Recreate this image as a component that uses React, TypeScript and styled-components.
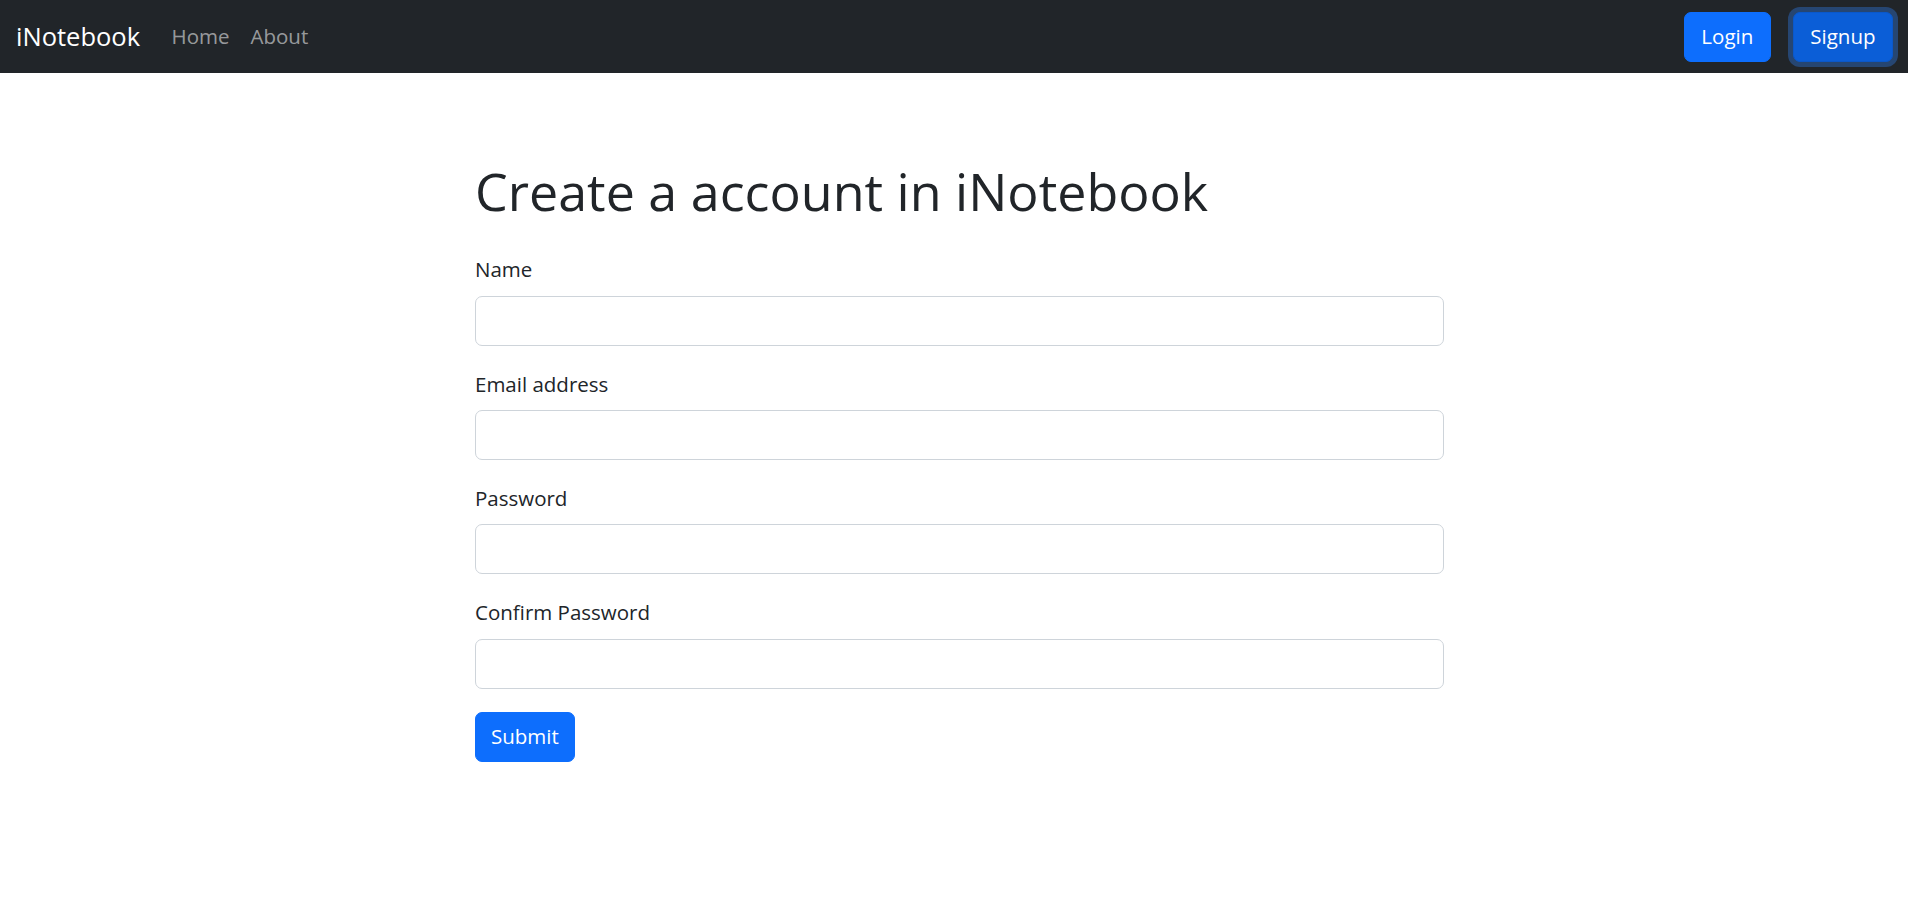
import styled, { createGlobalStyle } from "styled-components";

const GlobalStyle = createGlobalStyle`
  * {
    box-sizing: border-box;
  }
  body {
    margin: 0;
    background: #ffffff;
    color: #212529;
    font-family: "Open Sans", "Noto Sans", sans-serif;
  }
`;

const Navbar = styled.nav`
  height: 73px;
  background-color: #212529;
  display: flex;
  align-items: center;
  justify-content: space-between;
  padding: 0 15px 0 16px;
`;

const NavLeft = styled.div`
  display: flex;
  align-items: center;
`;

const Brand = styled.a`
  color: #ffffff;
  font-size: 25.5px;
  text-decoration: none;
  margin-right: 21px;
  line-height: 1.5;
`;

const NavLink = styled.a`
  color: rgba(255, 255, 255, 0.55);
  font-size: 20.5px;
  padding: 0 10.5px;
  text-decoration: none;
  line-height: 1.5;
`;

const NavRight = styled.div`
  display: flex;
  align-items: center;
  gap: 22px;
`;

const Button = styled.button<{ $focused?: boolean }>`
  height: 50px;
  padding: 0 15px;
  border: 1px solid ${(p) => (p.$focused ? "#0a58ca" : "#0d6efd")};
  border-radius: 7px;
  background-color: ${(p) => (p.$focused ? "#0b5ed7" : "#0d6efd")};
  color: #ffffff;
  font-family: "Open Sans", "Noto Sans", sans-serif;
  font-size: 20.5px;
  line-height: 1;
  box-shadow: ${(p) =>
    p.$focused ? "0 0 0 5px rgba(49, 132, 253, 0.35)" : "none"};
  cursor: pointer;
`;

const NavButton = styled(Button)`
  padding: 0 16.5px;
`;

const Wrapper = styled.main`
  width: 980px;
  margin: 0 auto;
  padding: 87px 0 0 11px;
`;

const Title = styled.h1`
  font-size: 52px;
  font-weight: 400;
  line-height: 1.2;
  margin: 0 0 31px;
  color: #212529;
`;

const Field = styled.div`
  display: flex;
  flex-direction: column;
  margin-bottom: 21.8px;
`;

const Label = styled.label`
  font-size: 20.5px;
  line-height: 32px;
  margin-bottom: 10.5px;
  color: #212529;
`;

const Input = styled.input`
  height: 50px;
  width: 100%;
  border: 1px solid #ced4da;
  border-radius: 7px;
  padding: 0 16px;
  font-size: 20px;
  font-family: "Open Sans", "Noto Sans", sans-serif;
  outline: none;
`;

const SubmitButton = styled(Button)`
  margin-top: 1px;
`;

const fields = [
  { id: "name", label: "Name", type: "text" },
  { id: "email", label: "Email address", type: "email" },
  { id: "password", label: "Password", type: "password" },
  { id: "cpassword", label: "Confirm Password", type: "password" },
];

function App() {
  return (
    <>
      <GlobalStyle />
      <Navbar>
        <NavLeft>
          <Brand href="#">iNotebook</Brand>
          <NavLink href="#">Home</NavLink>
          <NavLink href="#">About</NavLink>
        </NavLeft>
        <NavRight>
          <NavButton>Login</NavButton>
          <NavButton $focused>Signup</NavButton>
        </NavRight>
      </Navbar>
      <Wrapper>
        <Title>Create a account in iNotebook</Title>
        <form onSubmit={(e) => e.preventDefault()}>
          {fields.map((f) => (
            <Field key={f.id}>
              <Label htmlFor={f.id}>{f.label}</Label>
              <Input id={f.id} name={f.id} type={f.type} />
            </Field>
          ))}
          <SubmitButton type="submit">Submit</SubmitButton>
        </form>
      </Wrapper>
    </>
  );
}

export default App;
